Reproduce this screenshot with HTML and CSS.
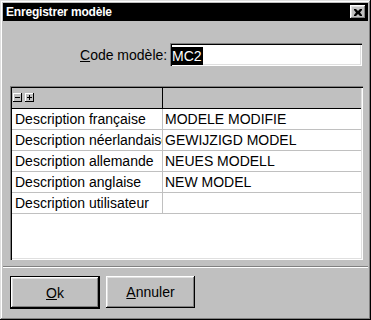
FILE: index.html
```html
<!DOCTYPE html>
<html lang="fr">
<head>
<meta charset="utf-8">
<title>Enregistrer modèle</title>
<link rel="stylesheet" href="styles.css">
</head>
<body>
<div class="window">
  <div class="titlebar">
    <span class="title">Enregistrer modèle</span>
    <div class="close">
      <svg width="8" height="7" viewBox="0 0 8 7"><path d="M0 0h2l2 2 2-2h2v1L6 3.5 8 6v1H6L4 5 2 7H0V6l2-2.5L0 1z" fill="#000"/></svg>
    </div>
  </div>
  <div class="client">
    <div class="code-row">
      <span class="label"><u>C</u>ode modèle:</span>
      <div class="textbox"><span class="sel">MC2</span></div>
    </div>
    <div class="grid">
      <div class="grid-head">
        <div class="head-cell first">
          <span class="tiny">
            <svg width="5" height="1" viewBox="0 0 5 1"><rect width="5" height="1" fill="#000"/></svg>
          </span>
          <span class="tiny">
            <svg width="5" height="5" viewBox="0 0 5 5"><rect y="2" width="5" height="1" fill="#000"/><rect x="2" width="1" height="5" fill="#000"/></svg>
          </span>
        </div>
        <div class="head-cell"></div>
      </div>
      <div class="row"><div class="cell first">Description française</div><div class="cell">MODELE MODIFIE</div></div>
      <div class="row"><div class="cell first">Description néerlandaise</div><div class="cell">GEWIJZIGD MODEL</div></div>
      <div class="row"><div class="cell first">Description allemande</div><div class="cell">NEUES MODELL</div></div>
      <div class="row"><div class="cell first">Description anglaise</div><div class="cell">NEW MODEL</div></div>
      <div class="row"><div class="cell first">Description utilisateur</div><div class="cell"></div></div>
    </div>
    <div class="separator"></div>
    <div class="buttons">
      <div class="btn default"><span><u>O</u>k</span></div>
      <div class="btn"><span><u>A</u>nnuler</span></div>
    </div>
  </div>
</div>
</body>
</html>
```

FILE: styles.css
```css
* { box-sizing: border-box; }
html, body { margin: 0; padding: 0; }
body {
  width: 371px;
  height: 320px;
  overflow: hidden;
  font-family: "Liberation Sans", Arial, sans-serif;
  font-size: 14px;
  color: #000;
  background: #c0c0c0;
}
.window {
  width: 371px;
  height: 320px;
  padding: 3px;
  background: #c0c0c0;
  box-shadow: inset -1px -1px #000, inset 1px 1px #dfdfdf, inset -2px -2px #808080, inset 2px 2px #fff;
  display: flex;
  flex-direction: column;
}
.titlebar {
  height: 18px;
  background: #000;
  display: flex;
  align-items: center;
  justify-content: space-between;
  padding: 0 2px 0 3px;
}
.title {
  color: #fff;
  font-weight: bold;
  font-size: 12px;
  letter-spacing: -0.2px;
}
.close {
  width: 16px;
  height: 14px;
  background: #c0c0c0;
  box-shadow: inset -1px -1px #000, inset 1px 1px #fff, inset -2px -2px #808080, inset 2px 2px #dfdfdf;
  display: flex;
  align-items: center;
  justify-content: center;
  padding-right: 1px;
}
.close svg { display: block; }
.client {
  flex: 1;
  display: flex;
  flex-direction: column;
}
.code-row {
  margin-top: 22px;
  height: 23px;
  display: flex;
  align-items: center;
  padding-left: 77px;
}
.label {
  width: 90px;
}
.textbox {
  width: 192px;
  height: 23px;
  background: #fff;
  box-shadow: inset 1px 1px #808080, inset 2px 2px #000, inset -1px -1px #fff, inset -2px -2px #dfdfdf;
  padding: 2px 0 0 2px;
  display: flex;
  align-items: center;
}
.sel {
  background: #000;
  color: #fff;
  line-height: 18px;
  padding: 0 1px 0 0;
}
.grid {
  margin: 20px 0 0 7px;
  width: 353px;
  height: 174px;
  background: #fff;
  box-shadow: inset 1px 1px #808080, inset 2px 2px #000, inset -1px -1px #fff, inset -2px -2px #dfdfdf;
  padding: 2px;
  display: flex;
  flex-direction: column;
}
.grid-head {
  height: 21px;
  display: flex;
  background: #c0c0c0;
  border-bottom: 1px solid #000;
}
.head-cell {
  flex: 1;
  display: flex;
  align-items: center;
  gap: 3px;
  padding-left: 1px;
}
.head-cell.first {
  flex: 0 0 151px;
  border-right: 1px solid #000;
  padding-bottom: 1px;
}
.tiny {
  width: 9px;
  height: 9px;
  background: #c0c0c0;
  box-shadow: inset -1px -1px #000, inset 1px 1px #fff;
  display: flex;
  align-items: center;
  justify-content: center;
}
.tiny svg { display: block; }
.row {
  height: 21px;
  display: flex;
  border-bottom: 1px solid #c0c0c0;
}
.cell {
  flex: 1;
  display: flex;
  align-items: center;
  padding-left: 2px;
  white-space: nowrap;
  overflow: hidden;
}
.cell.first {
  flex: 0 0 151px;
  border-right: 1px solid #c0c0c0;
  padding-left: 3px;
}
.separator {
  margin-top: 6px;
  height: 2px;
  border-top: 1px solid #808080;
  border-bottom: 1px solid #fff;
}
.buttons {
  margin-top: 8px;
  padding-left: 7px;
  display: flex;
  gap: 6px;
  align-items: flex-start;
}
.btn {
  width: 89px;
  height: 32px;
  background: #c0c0c0;
  box-shadow: inset -1px -1px #000, inset 1px 1px #fff, inset -2px -2px #808080, inset 2px 2px #dfdfdf;
  display: flex;
  align-items: center;
  justify-content: center;
}
.btn.default {
  width: 90px;
  height: 33px;
  border: 1px solid #000;
}
```
